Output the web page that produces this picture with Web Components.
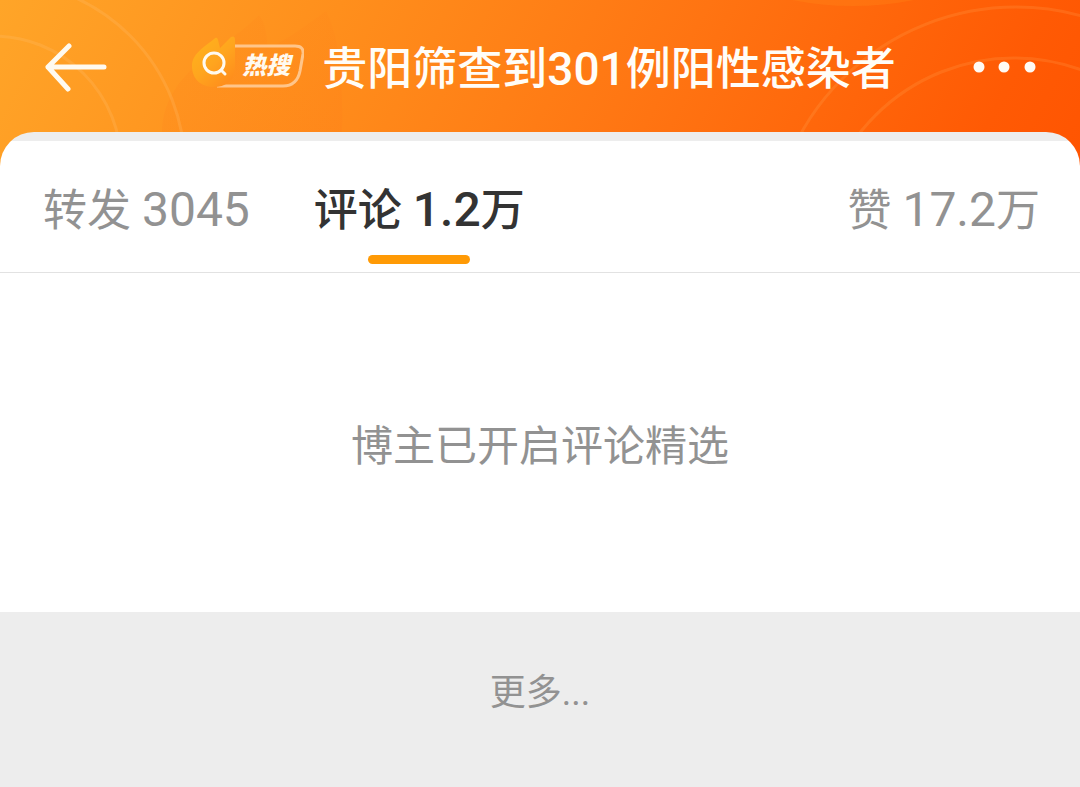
<!DOCTYPE html>
<html lang="zh-CN">
<head>
<meta charset="utf-8">
<meta name="viewport" content="width=device-width, initial-scale=1">
<title>贵阳筛查到301例阳性感染者</title>
<style>
  body { margin: 0; background: #ededed; font-family: Roboto, "Noto Sans CJK SC", sans-serif; color: #929292; }
</style>
</head>
<body>
<topic-page>
  <topic-header slot="header">贵阳筛查到<num-text>301</num-text>例阳性感染者</topic-header>
  <stat-tabs slot="tabs">
    <stat-tab>转发 <num-text>3045</num-text></stat-tab>
    <stat-tab active>评论 <num-text>1.2</num-text>万</stat-tab>
    <stat-tab end>赞 <num-text>17.2</num-text>万</stat-tab>
  </stat-tabs>
  <comment-notice>博主已开启评论精选</comment-notice>
  <more-link>更多...</more-link>
</topic-page>

<script>
function define(name, html) {
  const template = document.createElement('template');
  template.innerHTML = html;
  customElements.define(name, class extends HTMLElement {
    constructor() {
      super();
      this.attachShadow({ mode: 'open' }).append(template.content.cloneNode(true));
    }
  });
}

define('num-text', `<style>:host { display: inline; font-size: var(--num-size, 48px); line-height: 1; }</style><slot></slot>`);

define('topic-page', `
  <style>
    :host { display: block; }
    .hero { position: relative; overflow: hidden; background: linear-gradient(118deg, #ffa528 0%, #ff8f1c 28%, #ff7412 58%, #ff5a04 86%, #ff5200 100%); }
    .decor { position: absolute; top: 0; left: 0; width: 100%; height: 180px; }
    .content { position: relative; }
  </style>
  <div class="hero">
    <svg class="decor" viewBox="0 0 1080 180" preserveAspectRatio="none" aria-hidden="true">
      <defs>
        <linearGradient id="f" x1="0" y1="0" x2="0" y2="1">
          <stop offset="0" stop-color="#ff7a18" stop-opacity=".1"/>
          <stop offset="1" stop-color="#ff6a18" stop-opacity=".1"/>
        </linearGradient>
      </defs>
      <path d="M162 132C164 70 225 50 259 15C267 26 266 36 268 48C287 40 307 25 326 11C342 42 343 92 342 132Z" fill="url(#f)"/>
      <circle cx="853" cy="-309" r="315" fill="#ff9820" fill-opacity=".22"/>
      <g fill="none" stroke="#ffc070" stroke-opacity=".24" stroke-width="3">
        <circle cx="-2" cy="168" r="187"/>
        <circle cx="-7" cy="164" r="128"/>
        <circle cx="1016" cy="253" r="246" stroke-opacity=".16"/>
        <circle cx="1014" cy="254" r="196" stroke-opacity=".16"/>
      </g>
    </svg>
    <div class="content"><slot name="header"></slot><slot name="tabs"></slot></div>
  </div>
  <main><slot></slot></main>
`);

define('hot-badge', `
  <style>
    :host { display: grid; flex: none; width: 112px; height: 56px; margin-bottom: 4px; }
    svg, span { grid-area: 1 / 1; }
    svg { display: block; }
    span { align-self: center; padding: 0 0 0 50px; font: italic 900 24px/32px "Noto Sans CJK SC", sans-serif; color: #fffaf0; }
  </style>
  <svg width="112" height="56" viewBox="0 0 112 56" aria-hidden="true">
    <defs>
      <linearGradient id="g" x1=".1" y1=".1" x2=".8" y2="1">
        <stop offset="0" stop-color="#ffb21c"/>
        <stop offset=".5" stop-color="#ffa51e"/>
        <stop offset="1" stop-color="#ff8c1c"/>
      </linearGradient>
    </defs>
    <path d="M42 10H103Q112 10 111 18L108 35Q105 50 91 50H25" fill="none" stroke="#ffc58a" stroke-width="3"/>
    <path d="M0 30C0 18 11 12 22 3Q25 0 26 4L28 12L39 1Q43 -1 43 4V33C42 45 33 51 22 51C9 51 0 43 0 30Z" fill="url(#g)"/>
    <circle cx="22" cy="27" r="10" fill="none" stroke="#fffaf0" stroke-width="3"/>
    <path d="M29 34L33 38" stroke="#fffaf0" stroke-width="3" stroke-linecap="round"/>
  </svg>
  <span>热搜</span>
`);

define('topic-header', `
  <style>
    :host { display: block; --num-size: 46px; }
    header { display: flex; align-items: center; justify-content: space-between; height: 132px; padding: 0 44px; box-sizing: border-box; }
    button { display: flex; padding: 0; border: 0; background: none; flex: none; }
    .topic { display: flex; align-items: center; gap: 18px; padding-left: 8px; min-width: 0; }
    h1 { margin: 0; padding-top: 8px; color: #fffdf8; font-size: 45px; line-height: 64px; font-weight: 500; white-space: nowrap; }
  </style>
  <header>
    <button type="button" aria-label="返回">
      <svg width="64" height="52" viewBox="0 0 64 52" fill="none" stroke="#fffaf0" stroke-width="5" stroke-linecap="round" stroke-linejoin="round"><path d="M25 6L4 27L24 49M4 27H60"/></svg>
    </button>
    <div class="topic">
      <hot-badge></hot-badge>
      <h1><slot></slot></h1>
    </div>
    <button type="button" aria-label="更多选项">
      <svg width="64" height="52" viewBox="0 0 64 52" fill="#fffaf5"><circle cx="7" cy="27" r="5.5"/><circle cx="32" cy="27" r="5.5"/><circle cx="58" cy="27" r="5.5"/></svg>
    </button>
  </header>
`);

define('stat-tabs', `
  <style>
    :host { display: block; }
    nav { display: flex; gap: 64px; padding: 9px 40px 0 43px; background: linear-gradient(#ededed 9px, #fff 9px); border-bottom: 1px solid #e2e2e2; border-radius: 34px 34px 0 0; }
  </style>
  <nav><slot></slot></nav>
`);

define('stat-tab', `
  <style>
    :host { display: block; }
    :host([end]) { margin-left: auto; }
    button { display: flex; flex-direction: column; align-items: center; gap: 12px; padding: 38px 0 8px; border: 0; background: none; font: inherit; font-size: 44px; line-height: 64px; color: #929292; white-space: nowrap; }
    button::after { content: ""; width: 102px; height: 9px; border-radius: 5px; }
    :host([active]) button { color: #333; font-weight: 500; }
    :host([active]) button::after { background: #ff9a05; }
  </style>
  <button type="button"><span><slot></slot></span></button>
`);

define('comment-notice', `
  <style>
    :host { display: block; background: #fff; }
    p { margin: 0; padding: 142px 24px 133px; text-align: center; font-size: 42px; line-height: 64px; }
  </style>
  <p><slot></slot></p>
`);

define('more-link', `
  <style>
    :host { display: block; background: #ededed; text-align: center; padding: 57px 24px 70px; }
    a { display: inline-block; vertical-align: top; color: #929292; text-decoration: none; font-size: 36px; line-height: 48px; }
  </style>
  <a href="#more"><slot></slot></a>
`);
</script>
</body>
</html>
